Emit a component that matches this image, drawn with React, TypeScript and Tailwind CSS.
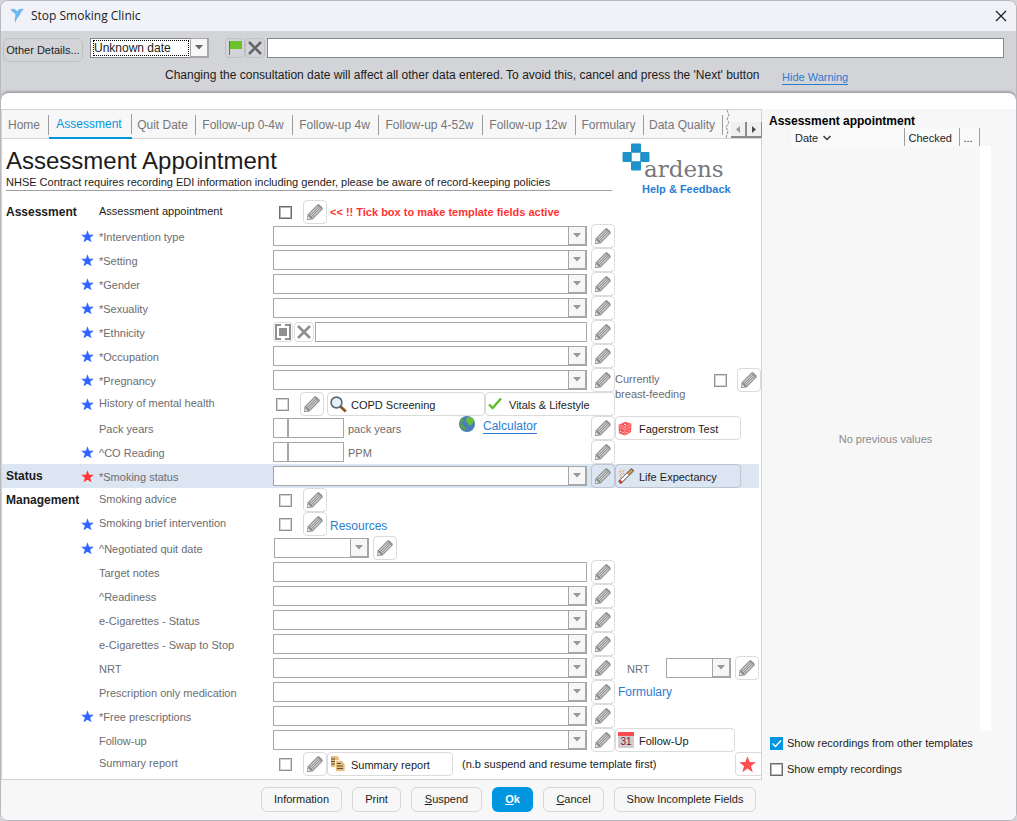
import type { ReactNode } from "react";
import clsx from "clsx";

interface FieldRow {
  id: string;
  label: string;
  section?: string;
  star?: "blue" | "red";
  // tick rows carry their caption a little higher than the boxed fields
  tick?: boolean;
  active?: boolean;
  highlight?: boolean;
  field: ReactNode;
}

const TABS = [
  { name: "Home", width: "w-[47px]" },
  { name: "Assessment", width: "w-[83px]" },
  { name: "Quit Date", width: "w-[64px]" },
  { name: "Follow-up 0-4w", width: "w-[97px]" },
  { name: "Follow-up 4w", width: "w-[86px]" },
  { name: "Follow-up 4-52w", width: "w-[104px]" },
  { name: "Follow-up 12w", width: "w-[93px]" },
  { name: "Formulary", width: "w-[68px]" },
  { name: "Data Quality", width: "w-[79px]" },
];

/* ---------- icons ---------- */

function BirdIcon() {
  return (
    <svg width="16" height="16" viewBox="0 0 16 16" className="shrink-0">
      <path d="M1.5 1.4 C4 0.2 6.6 0.8 8.2 3.4 C9.4 1 12 0.4 14.8 1.2 L13.4 2.4 C12.4 3.4 11.8 5.4 10.6 7.2 C9.4 9 7.4 10.4 6.4 15 C5.6 12.8 5.6 10.6 6.2 9 C6.8 7.4 6.6 6 5.2 5 C4 4.2 2.6 3 1.5 1.4 Z" fill="#6cb8f0" />
    </svg>
  );
}

function PencilIcon() {
  return (
    <svg width="18" height="18" viewBox="0 0 18 18" fill="none">
      <path d="M1 17 L1.6 11.4 L11.4 1.6 Q12.4 0.8 13.4 1.6 L16.4 4.6 Q17.2 5.6 16.4 6.6 L6.6 16.4 Z" fill="#909090" />
      <path d="M3.6 11.8 L12.2 3.2 M6.2 14.4 L14.8 5.8" stroke="#fff" strokeWidth="0.9" />
      <path d="M4.9 13.1 L13.5 4.5" stroke="#fff" strokeWidth="0.7" />
      <path d="M2.4 13.6 L4.4 15.6 L2.1 15.9 Z" fill="#fff" />
    </svg>
  );
}

function StarIcon({ color, size }: { color: string; size: number }) {
  return (
    <svg width={size} height={size} viewBox="0 0 24 24">
      <path d="M12 0.4 L15 8.6 L23.8 8.9 L16.9 14.2 L19.4 22.8 L12 17.8 L4.6 22.8 L7.1 14.2 L0.2 8.9 L9 8.6 Z" fill={color} />
    </svg>
  );
}

function CrossIcon({ color }: { color: string }) {
  return (
    <svg width="14" height="14" viewBox="0 0 14 14">
      <path d="M1 1 L13 13 M13 1 L1 13" stroke={color} strokeWidth="2.6" />
    </svg>
  );
}

function DownArrow({ color }: { color: string }) {
  return (
    <svg width="8" height="5" viewBox="0 0 8 5">
      <path d="M0 0 H8 L4 4.5 Z" fill={color} />
    </svg>
  );
}

function ArdensMark() {
  return (
    <svg width="28" height="28" viewBox="0 0 28 28" className="shrink-0">
      <g fill="#1e93cb">
        <rect x="9" y="0.5" width="10" height="9" rx="1" />
        <rect x="0.5" y="9" width="9" height="10" rx="1" />
        <rect x="18.5" y="9" width="9" height="10" rx="1" />
        <rect x="9" y="18.5" width="10" height="9" rx="1" />
      </g>
      <g fill="#1b86bb">
        <rect x="9.5" y="8.5" width="9" height="1" />
        <rect x="8.5" y="9.5" width="1" height="9" />
        <rect x="18.5" y="9.5" width="1" height="9" />
        <rect x="9.5" y="18.5" width="9" height="1" />
      </g>
      <circle cx="14" cy="14" r="4" fill="#f3fafd" />
    </svg>
  );
}

function MagnifierIcon() {
  return (
    <svg width="17" height="17" viewBox="0 0 17 17">
      <path d="M10.4 10.4 L15.8 15.6" stroke="#8a5a24" strokeWidth="2.8" />
      <circle cx="6.5" cy="6.5" r="5.4" fill="#e3f2fb" stroke="#5c6670" strokeWidth="1.6" />
    </svg>
  );
}

function TickIcon() {
  return (
    <svg width="14" height="14" viewBox="0 0 14 14">
      <path d="M1 7.5 L4.6 11 L13 1.5" fill="none" stroke="#5cbf2a" strokeWidth="2.4" />
    </svg>
  );
}

function GlobeIcon() {
  return (
    <svg width="16" height="16" viewBox="0 0 16 16" className="shrink-0">
      <circle cx="8" cy="8" r="8" fill="#4a7ebb" />
      <path d="M8 1 L12 1.2 L14.5 4 L14 7 L11.5 9.5 L9.5 9 L9 7 L7 6 L7.4 3 Z" fill="#6abf3a" />
      <path d="M2 3 L4.5 2 L4 5 L2.6 7.5 L5 10 L6.6 12.5 L5.5 14.5 L2.6 12 L1 8.5 Z" fill="#5aa53c" />
    </svg>
  );
}

function DiceIcon() {
  return (
    <svg width="14" height="15" viewBox="0 0 14 15">
      <path d="M7.4 0.8 L13.4 2.8 L13 11 L7 14.4 L1 12.2 L0.6 3.8 Z" fill="#fb5356" />
      <path d="M0.8 4 L7 6 L13.2 3 M7 6 V14" stroke="#ffd0d0" strokeWidth="0.6" fill="none" />
      <g fill="#fff">
        <ellipse cx="7" cy="3.3" rx="1.2" ry="0.6" />
        <circle cx="2.7" cy="6.9" r="0.6" />
        <circle cx="5" cy="11.4" r="0.6" />
        <circle cx="2.7" cy="10.4" r="0.6" />
        <circle cx="5" cy="7.8" r="0.6" />
        <circle cx="9" cy="8" r="0.6" />
        <circle cx="11.2" cy="9.7" r="0.6" />
        <circle cx="9" cy="11.4" r="0.6" />
        <circle cx="11.2" cy="6.4" r="0.6" />
      </g>
    </svg>
  );
}

function CigaretteIcon() {
  return (
    <svg width="16" height="16" viewBox="0 0 16 16" fill="none">
      <path d="M1.6 14.6 L14.8 1.4" stroke="#55504c" strokeWidth="4" />
      <path d="M3 13.2 L10 6.2" stroke="#fff" strokeWidth="2.4" />
      <path d="M10 6.2 L14.2 2" stroke="#d79a55" strokeWidth="2.6" />
      <path d="M1.4 14.8 L3.4 12.8" stroke="#e23b2e" strokeWidth="3" />
      <path d="M3 10 L1.8 8 L3.6 6 L2 4 L3.4 1.5 M6 6 L5 3.6 L7 1.6" stroke="#e0a860" strokeWidth="1.2" strokeDasharray="1.5 1" />
    </svg>
  );
}

function ReportIcon() {
  return (
    <svg width="16" height="16" viewBox="0 0 16 16">
      <path d="M1 0 H7 L9 2 V11 H1 Z" fill="#e8be7c" />
      <path d="M1 3 H5 M1 5.5 H5 M1 8 H5" stroke="#5d5140" />
      <path d="M5.5 4.5 H11.5 L15 8 V15.5 H5.5 Z" fill="#e8be7c" stroke="#fff" strokeWidth="0.7" />
      <path d="M7 7.5 H11 M7 10 H13 M7 12.5 H13" stroke="#5d5140" />
    </svg>
  );
}

function CalendarIcon() {
  return (
    <span className="flex h-4 w-4 flex-col bg-[#cfcfcf] text-center text-[10px] leading-3 text-[#8b1238]">
      <span className="h-1 w-full shrink-0 bg-[#fb4d4d]" />
      31
    </span>
  );
}

/* ---------- controls ---------- */

function EditButton({ label }: { label: string }) {
  return (
    <button
      type="button"
      aria-label={`Edit ${label}`}
      className="flex h-6 w-6 shrink-0 items-center justify-center rounded border border-black/14"
    >
      <PencilIcon />
    </button>
  );
}

function Combo({ id, width = "w-[314px]" }: { id: string; width?: string }) {
  return (
    <div className={clsx("relative h-5 shrink-0", width)}>
      <select id={id} className="h-5 w-full appearance-none border border-[#a6a6ac] bg-white pl-1">
        <option />
      </select>
      <span className="pointer-events-none absolute inset-y-0 right-0 flex w-[19px] items-center justify-center border border-r-2 border-b-2 border-[#a6a6ac] bg-[#f7f7f8]">
        <DownArrow color="#98989c" />
      </span>
    </div>
  );
}

function Tick({ id, dark }: { id: string; dark?: boolean }) {
  return (
    <input
      id={id}
      type="checkbox"
      className={clsx(
        "h-[13px] w-[13px] shrink-0 appearance-none border bg-white inset-ring checked:bg-[#0097e0]",
        dark ? "border-[#6c6c70] inset-ring-[#b4b4b6]" : "border-[#929296] inset-ring-[#d4d4d6]"
      )}
    />
  );
}

function ComboField({ id, children }: { id: string; children?: ReactNode }) {
  return (
    <>
      <Combo id={id} />
      <span className="w-1 shrink-0" />
      <EditButton label={id} />
      {children}
    </>
  );
}

function TickField({ id, dark, children }: { id: string; dark?: boolean; children?: ReactNode }) {
  return (
    <>
      <span className="flex w-[30px] shrink-0 pl-1.5">
        <Tick id={id} dark={dark} />
      </span>
      <EditButton label={id} />
      {children}
    </>
  );
}

function MeasureInput({ id }: { id: string }) {
  return (
    <span className="flex h-5 w-[71px] shrink-0 border border-[#a6a6ac] bg-white">
      <input aria-label={`${id} operator`} className="w-[15px] border-r-2 border-[#a6a6ac]" />
      <input id={id} className="w-0 flex-1" />
    </span>
  );
}

function ActionButton({ icon, width, children }: { icon: ReactNode; width: string; children: ReactNode }) {
  return (
    <button
      type="button"
      className={clsx(
        "flex h-6 shrink-0 items-center rounded border border-black/14 pl-0.5 text-[#1c1c1c]",
        width
      )}
    >
      <span className="flex w-[21px] shrink-0 items-center">{icon}</span>
      <span className="pt-0.5">{children}</span>
    </button>
  );
}

function StarButton() {
  return (
    <button
      type="button"
      aria-label="Favourite"
      className="ml-auto flex h-6 w-[26px] items-center rounded-l border border-r-0 border-black/14 pl-[3px]"
    >
      <StarIcon color="#ff4f4f" size={17} />
    </button>
  );
}

/* ---------- template rows ---------- */

const ROWS: FieldRow[] = [
  {
    id: "appointment",
    section: "Assessment",
    label: "Assessment appointment",
    tick: true,
    active: true,
    field: (
      <TickField id="appointment" dark>
        <strong className="pl-[3px] text-[#ff3333]">&lt;&lt; !! Tick box to make template fields active</strong>
      </TickField>
    ),
  },
  { id: "intervention", label: "*Intervention type", star: "blue", field: <ComboField id="intervention" /> },
  { id: "setting", label: "*Setting", star: "blue", field: <ComboField id="setting" /> },
  { id: "gender", label: "*Gender", star: "blue", field: <ComboField id="gender" /> },
  { id: "sexuality", label: "*Sexuality", star: "blue", field: <ComboField id="sexuality" /> },
  {
    id: "ethnicity",
    label: "*Ethnicity",
    star: "blue",
    field: (
      <>
        <button type="button" aria-label="Browse codes" className="flex h-5 w-5 items-center justify-center rounded border border-black/14">
          <svg width="16" height="16" viewBox="0 0 16 16" fill="none" className="shrink-0">
            <path d="M6 1 H1 V15 H6 M10 1 H15 V15 H10" stroke="#8f8f8f" strokeWidth="2" />
            <rect x="4" y="4" width="8" height="8" fill="#8f8f8f" />
          </svg>
        </button>
        <button type="button" aria-label="Clear code" className="mx-px flex h-5 w-5 items-center justify-center rounded border border-black/14">
          <CrossIcon color="#8f8f8f" />
        </button>
        <input id="ethnicity" className="mr-1 h-5 w-[272px] shrink-0 border border-[#a6a6ac] bg-white px-1" />
        <EditButton label="ethnicity" />
      </>
    ),
  },
  { id: "occupation", label: "*Occupation", star: "blue", field: <ComboField id="occupation" /> },
  {
    id: "pregnancy",
    label: "*Pregnancy",
    star: "blue",
    field: (
      <ComboField id="pregnancy">
        <label htmlFor="breastfeeding" className="h-4 w-[99px] shrink-0 leading-[15px]">
          Currently
          <br />
          breast-feeding
        </label>
        <Tick id="breastfeeding" />
        <span className="ml-auto flex">
          <EditButton label="breastfeeding" />
        </span>
      </ComboField>
    ),
  },
  {
    id: "mental-health",
    label: "History of mental health",
    star: "blue",
    tick: true,
    field: (
      <>
        <span className="flex w-[27px] shrink-0 pl-[3px]">
          <Tick id="mental-health" />
        </span>
        <EditButton label="mental-health" />
        <span className="ml-[3px] flex">
          <ActionButton icon={<MagnifierIcon />} width="w-[158px]">COPD Screening</ActionButton>
          <ActionButton icon={<TickIcon />} width="w-[130px]">Vitals &amp; Lifestyle</ActionButton>
        </span>
      </>
    ),
  },
  {
    id: "pack-years",
    label: "Pack years",
    field: (
      <>
        <MeasureInput id="pack-years" />
        <span className="w-[115px] shrink-0 pt-0.5 pl-1">pack years</span>
        <span className="flex w-[132px] shrink-0 items-start gap-2 self-start">
          <GlobeIcon />
          <a href="#calculator" className="mt-1 border-b border-[#2b7cd3] text-xs leading-[13px] text-[#2b7cd3]">
            Calculator
          </a>
        </span>
        <EditButton label="pack-years" />
        <ActionButton icon={<DiceIcon />} width="w-[126px]">Fagerstrom Test</ActionButton>
      </>
    ),
  },
  {
    id: "co-reading",
    label: "^CO Reading",
    star: "blue",
    field: (
      <>
        <MeasureInput id="co-reading" />
        <span className="w-[247px] shrink-0 pt-0.5 pl-1">PPM</span>
        <EditButton label="co-reading" />
      </>
    ),
  },
  {
    id: "smoking-status",
    section: "Status",
    label: "*Smoking status",
    star: "red",
    highlight: true,
    field: (
      <ComboField id="smoking-status">
        <ActionButton icon={<CigaretteIcon />} width="w-[126px]">Life Expectancy</ActionButton>
      </ComboField>
    ),
  },
  { id: "advice", section: "Management", label: "Smoking advice", tick: true, field: <TickField id="advice" /> },
  {
    id: "brief",
    label: "Smoking brief intervention",
    star: "blue",
    tick: true,
    field: (
      <TickField id="brief">
        <a href="#resources" className="pt-1 pl-[3px] text-xs text-[#2b7cd3]">Resources</a>
      </TickField>
    ),
  },
  {
    id: "quit-date",
    label: "^Negotiated quit date",
    star: "blue",
    field: (
      <>
        <span className="mr-1 ml-px flex">
          <Combo id="quit-date" width="w-[95px]" />
        </span>
        <EditButton label="quit-date" />
      </>
    ),
  },
  {
    id: "notes",
    label: "Target notes",
    field: (
      <>
        <input id="notes" className="mr-1 h-5 w-[314px] shrink-0 border border-[#a6a6ac] bg-white px-1" />
        <EditButton label="notes" />
      </>
    ),
  },
  { id: "readiness", label: "^Readiness", field: <ComboField id="readiness" /> },
  { id: "ecig-status", label: "e-Cigarettes - Status", field: <ComboField id="ecig-status" /> },
  { id: "ecig-swap", label: "e-Cigarettes - Swap to Stop", field: <ComboField id="ecig-swap" /> },
  {
    id: "nrt",
    label: "NRT",
    field: (
      <ComboField id="nrt">
        <label htmlFor="nrt-amount" className="w-[51px] shrink-0 pt-0.5 pl-3">NRT</label>
        <Combo id="nrt-amount" width="w-[65px]" />
        <span className="ml-1 flex">
          <EditButton label="nrt-amount" />
        </span>
      </ComboField>
    ),
  },
  {
    id: "medication",
    label: "Prescription only medication",
    field: (
      <ComboField id="medication">
        <a href="#formulary" className="pl-[3px] text-xs text-[#2b7cd3]">Formulary</a>
      </ComboField>
    ),
  },
  { id: "free-rx", label: "*Free prescriptions", star: "blue", field: <ComboField id="free-rx" /> },
  {
    id: "follow-up",
    label: "Follow-up",
    field: (
      <ComboField id="follow-up">
        <ActionButton icon={<CalendarIcon />} width="w-[120px]">Follow-Up</ActionButton>
      </ComboField>
    ),
  },
  {
    id: "summary",
    label: "Summary report",
    tick: true,
    field: (
      <TickField id="summary">
        <ActionButton icon={<ReportIcon />} width="w-[126px]">Summary report</ActionButton>
        <span className="pl-[9px] text-[#1c1c1c]">(n.b suspend and resume template first)</span>
        <StarButton />
      </TickField>
    ),
  },
];

function TemplateRow({ row }: { row: FieldRow }) {
  return (
    <div className={clsx("flex h-6 items-center pl-1", row.highlight && "mr-0.5 bg-[#dce5f2]")}>
      <strong className="w-[75px] shrink-0 text-xs text-[#1c1c1c]">{row.section}</strong>
      <span className="w-[18px] shrink-0">
        {row.star && <StarIcon color={row.star === "red" ? "#ff3333" : "#3366ff"} size={13} />}
      </span>
      <label
        htmlFor={row.id}
        className={clsx("w-[174px] shrink-0", row.tick ? "pb-0.5" : "pt-0.5", row.active && "text-[#1c1c1c]")}
      >
        {row.label}
      </label>
      <div className="flex h-6 min-w-0 flex-1 items-center">{row.field}</div>
    </div>
  );
}

/* ---------- page sections ---------- */

function TitleBar() {
  return (
    <header className="flex h-[30px] items-center bg-[#f1f2f8] pr-[9px] pl-2">
      <BirdIcon />
      <h1 className="flex-1 pl-1.5 font-['Open_Sans',sans-serif] text-xs text-[#1c1c1c]">Stop Smoking Clinic</h1>
      <button type="button" aria-label="Close" className="flex h-4 w-3 items-center">
        <svg width="12" height="12" viewBox="0 0 12 12">
          <path d="M1 1 L11 11 M11 1 L1 11" stroke="#1c1c1c" strokeWidth="1.2" />
        </svg>
      </button>
    </header>
  );
}

function ConsultationBar() {
  return (
    <div className="h-[68px] bg-[#d3d4d8] pt-[7px] pr-3 pl-0.5">
      <div className="flex items-start">
        <button type="button" className="h-6 w-20 shrink-0 rounded-md border border-[#bfc0c4] text-[#1c1c1c]">
          Other Details...
        </button>
        <div className="relative ml-[7px] h-5 w-[119px] shrink-0">
          <select
            aria-label="Consultation date"
            className="h-5 w-full appearance-none border border-[#86888e] bg-white pl-[3px] text-xs text-[#1c1c1c]"
          >
            <option>Unknown date</option>
          </select>
          <span className="pointer-events-none absolute inset-y-0.5 left-[3px] w-24 border border-dotted border-black" />
          <span className="pointer-events-none absolute inset-y-0 right-0 flex w-[19px] items-center justify-center border border-r-2 border-b-2 border-[#a6a6ac] bg-[#f7f7f8]">
            <DownArrow color="#66666a" />
          </span>
        </div>
        <button
          type="button"
          aria-label="Flag"
          className="ml-4 flex h-5 w-5 shrink-0 items-center justify-center rounded border border-[#bfc0c4]"
        >
          <svg width="14" height="16" viewBox="0 0 14 16">
            <rect x="1" y="1" width="1" height="14" fill="#6a6a6a" />
            <rect x="2" y="1" width="12" height="8" fill="#6cc12c" />
          </svg>
        </button>
        <button
          type="button"
          aria-label="Clear"
          className="mr-0.5 flex h-5 w-5 shrink-0 items-center justify-center rounded border border-[#bfc0c4]"
        >
          <CrossIcon color="#66666a" />
        </button>
        <input aria-label="Consultation note" className="h-5 min-w-0 flex-1 border border-[#86888e] bg-white px-1" />
      </div>
      <p className="flex items-start pt-[5px] pl-[162px] text-xs leading-4 whitespace-nowrap text-[#1c1c1c]">
        <span className="w-[617px] shrink-0">
          Changing the consultation date will affect all other data entered. To avoid this, cancel and press the
          &apos;Next&apos; button
        </span>
        <a href="#hide" className="mt-1 border-b border-[#2b7cd3] text-[11px] leading-[13px] text-[#2b7cd3]">
          Hide Warning
        </a>
      </p>
    </div>
  );
}

function TabStrip() {
  return (
    <nav className="flex h-[30px] items-center border-y border-[#d3d3d7] bg-[#f7f7f7]">
      {TABS.map((tab) => {
        const current = tab.name === "Assessment";
        return (
          <a
            key={tab.name}
            href="#tab"
            className={clsx(
              "flex h-[30px] shrink-0 items-center text-xs whitespace-nowrap",
              tab.width,
              current ? "border-b-2 border-[#0097e0] pt-0.5 text-[#0097e0]" : "pt-0.5 text-[#76767a]"
            )}
          >
            <span className="flex-1 pr-0.5 text-center">{tab.name}</span>
            <span className="h-5 w-px bg-[#9c9ca0]" />
          </a>
        );
      })}
      <svg width="8" height="28" viewBox="0 0 8 28" className="ml-auto shrink-0">
        <path d="M4 0 L6 5 L4 9 L6 13 L3 17 L5 21 L3 28" fill="none" stroke="#8c8c90" strokeDasharray="3 1" />
      </svg>
      <span className="flex self-end">
        {["left", "right"].map((dir) => (
          <button
            key={dir}
            type="button"
            aria-label={`Scroll tabs ${dir}`}
            className="flex h-4 w-4 items-center justify-center border-r-2 border-b-2 border-[#8c8c90] bg-[#f0f0f0]"
          >
            <svg width="4" height="7" viewBox="0 0 4 7">
              <path d={dir === "left" ? "M4 0 V7 L0 3.5 Z" : "M0 0 V7 L4 3.5 Z"} fill={dir === "left" ? "#98989c" : "#4c4c50"} />
            </svg>
          </button>
        ))}
      </span>
    </nav>
  );
}

function TemplateHeading() {
  return (
    <div className="flex h-[61px] pl-1">
      <div className="w-[606px] shrink-0">
        <div className="h-[52px] border-b border-[#a0a0a4] pt-[7px]">
          <h2 className="text-2xl leading-[30px] text-[#1c1c1c]">Assessment Appointment</h2>
          <p className="leading-[13px] text-[#1c1c1c]">
            NHSE Contract requires recording EDI information including gender, please be aware of record-keeping
            policies
          </p>
        </div>
      </div>
      <div className="pt-1 pl-2.5">
        <div className="flex h-10">
          <ArdensMark />
          <span className="-ml-1.5 pt-2.5 font-['DejaVu_Serif',serif] text-[23px] leading-8 font-light text-[#76787e]">
            ardens
          </span>
        </div>
        <a href="#help" className="block pl-5 leading-3 font-bold text-[#2b7cd3]">
          Help &amp; Feedback
        </a>
      </div>
    </div>
  );
}

function HistoryPanel() {
  return (
    <aside className="flex w-[254px] shrink-0 flex-col bg-[#f7f7f7] pl-[7px] text-[#1c1c1c]">
      <h3 className="h-[19px] pt-1 text-xs leading-4 font-bold text-black">Assessment appointment</h3>
      <table className="ml-[22px] w-[189px] table-fixed bg-[#fafafa] leading-4">
        <thead>
          <tr className="h-[18px] text-left">
            <th className="w-[113px] border-r border-[#a0a0a4] pt-0.5 pl-1 font-normal">
              <span className="flex items-center gap-1">
                Date
                <svg width="10" height="6" viewBox="0 0 10 6" fill="none">
                  <path d="M1.5 1 L5 4.5 L8.5 1" stroke="#3c3c40" strokeWidth="1.5" />
                </svg>
              </span>
            </th>
            <th className="w-[55px] border-r border-[#a0a0a4] pt-0.5 pl-1 font-normal">Checked</th>
            <th className="border-r border-[#a0a0a4] pt-0.5 pl-1 font-normal">...</th>
          </tr>
        </thead>
      </table>
      <div className="flex h-[585px]">
        <p className="flex w-[211px] items-center justify-center pt-0.5 pl-[22px] text-[#8a8a8e]">No previous values</p>
        <span className="w-[11px] bg-white" />
      </div>
      <label className="flex h-6 items-center gap-1 pl-px">
        <input
          type="checkbox"
          defaultChecked
          className="h-[13px] w-[13px] appearance-none bg-[#a0a0a2] checked:bg-[#0097e0]"
        />
        <svg width="13" height="13" viewBox="0 0 13 13" className="pointer-events-none -ml-[17px]">
          <path d="M2.5 6.5 L5.5 9.5 L11 3.5" fill="none" stroke="#fff" strokeWidth="1.4" />
        </svg>
        Show recordings from other templates
      </label>
      <label className="mt-1 flex h-5 items-center gap-1 pl-px">
        <Tick id="show-empty" dark />
        Show empty recordings
      </label>
    </aside>
  );
}

function Footer() {
  const button = "h-[25px] rounded-md border border-[#d6d6da] text-[#1c1c1c]";
  return (
    <footer className="flex h-10 items-start justify-center gap-2.5 bg-[#f7f7f7] pt-[7px]">
      <button type="button" className={clsx(button, "w-[81px]")}>Information</button>
      <button type="button" className={clsx(button, "w-[49px]")}>Print</button>
      <button type="button" className={clsx(button, "w-[71px]")}>
        <u>S</u>uspend
      </button>
      <button type="button" className="h-[25px] w-[41px] rounded-md bg-[#0097e0] font-bold text-white">
        <u>O</u>k
      </button>
      <button type="button" className={clsx(button, "w-[61px]")}>
        <u>C</u>ancel
      </button>
      <button type="button" className={clsx(button, "w-[142px]")}>Show Incomplete Fields</button>
    </footer>
  );
}

export default function App() {
  return (
    <div className="bg-[#d6d6da] font-['Liberation_Sans',Arial,sans-serif] text-[11px] text-[#6c6c70]">
      <div className="overflow-hidden rounded-lg border border-[#b8b8bc] bg-[#f7f7f7]">
        <TitleBar />
        <ConsultationBar />
        <div className="relative -mt-[7px] rounded-t-lg border-t border-[#a2a3a9] bg-white pt-4 shadow-[0_-1px_2px_#a2a3a9]">
          <div className="flex">
            <main className="min-w-0 flex-1 border-r border-b border-l border-[#d3d3d7] bg-white pb-[3px]">
              <TabStrip />
              <TemplateHeading />
              <form>
                {ROWS.map((row) => (
                  <TemplateRow key={row.id} row={row} />
                ))}
              </form>
            </main>
            <HistoryPanel />
          </div>
          <Footer />
        </div>
      </div>
    </div>
  );
}
